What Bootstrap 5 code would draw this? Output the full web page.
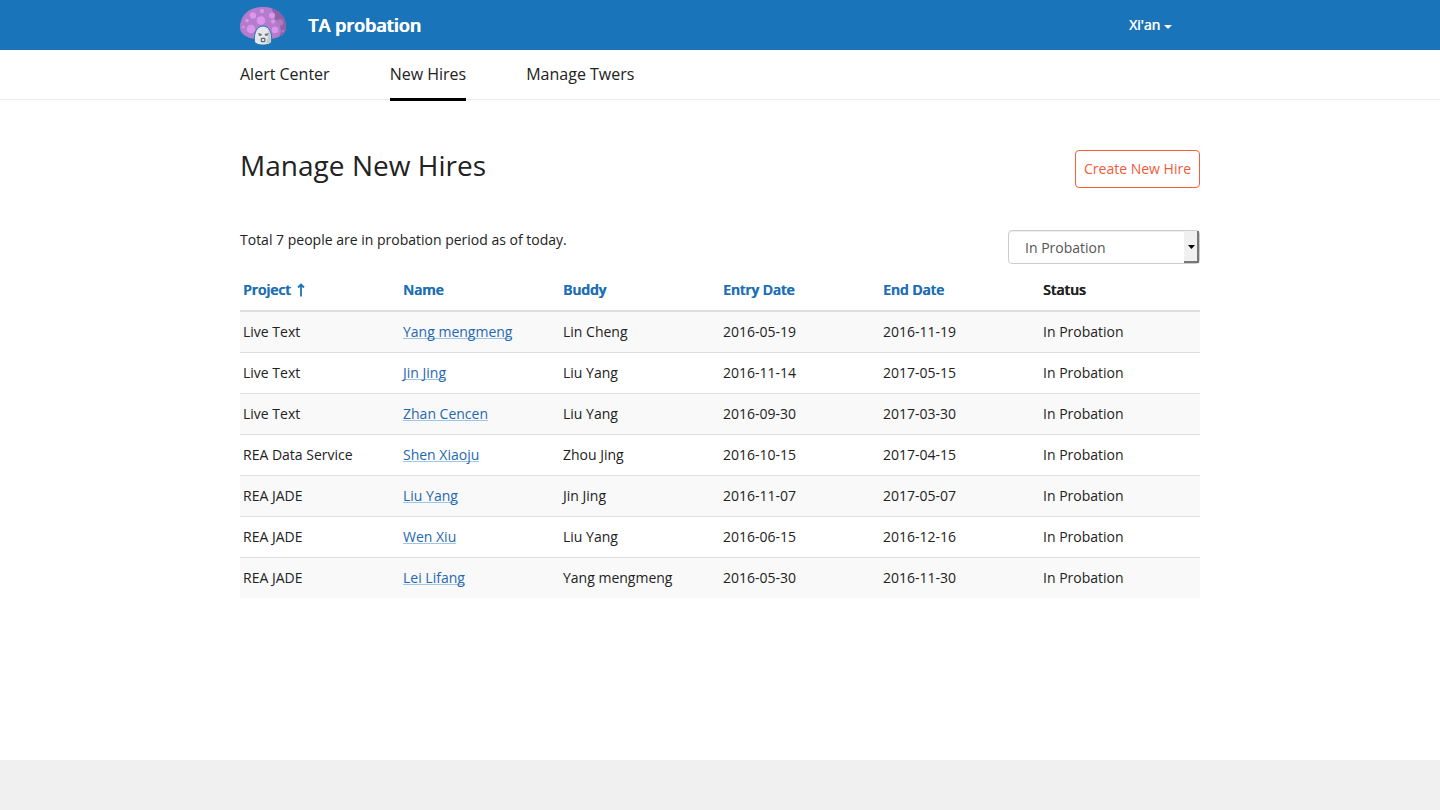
<!DOCTYPE html>
<html lang="en">
<head>
<meta charset="utf-8">
<meta name="viewport" content="width=device-width, initial-scale=1">
<title>TA probation</title>
<link rel="stylesheet" href="https://cdn.jsdelivr.net/npm/bootstrap@5.3.0/dist/css/bootstrap.min.css">
<style>
body{font-family:"Open Sans",sans-serif;font-size:14px;line-height:20px;color:#222;background:#fff;min-height:810px}
.page-wrap{width:960px}
.top-bar{height:50px;background:#1a74ba}
.logo{margin-top:2px}
.brand-name{font-size:18px;line-height:26px;margin-left:22px;font-weight:600;text-shadow:.8px 0 currentColor}
.office{margin-right:28px;text-shadow:.5px 0 currentColor}
.office::after{border-top:4px solid;border-left:4px solid transparent;border-right:4px solid transparent;margin-left:4px;vertical-align:1px}
.tab-bar{height:50px;border-bottom:1px solid #ececec}
.tab-bar .nav{gap:60px}
.tab-bar .nav-link{font-size:16px;line-height:24px;padding:12px 0 12px;height:51px;color:#222}
.tab-bar .nav-link.active{border-bottom:3px solid #000}
.title-row{margin-top:50px}
.filter-row{margin-top:42px}
.page-title{font-size:28px;line-height:30px;letter-spacing:.03px}
.btn-hire{--bs-btn-color:#f4593a;--bs-btn-border-color:#f65f36;--bs-btn-padding-x:8px;--bs-btn-padding-y:8px;--bs-btn-font-size:14px;--bs-btn-line-height:20px;--bs-btn-border-radius:4px;width:125px;height:38px}
.status-pick{width:192px;height:34px;border:1px solid #ccc;border-radius:4px;color:#555;padding:0 0 0 16px;box-shadow:inset 0 1px 1px rgba(0,0,0,.075)}
.pick-label{padding-top:2px}
.pick-arrow{width:15px;height:32px;background:#f0f0f0;border-right:2px solid #777;border-bottom:2px solid #777;padding:2px 0 0 1px}
.hires{--bs-table-color:#222;--bs-table-striped-color:#222;--bs-table-striped-bg:#f9f9f9;--bs-table-bg:#fff;table-layout:fixed;margin-top:5px}
.hires>:not(caption)>*>*{padding:10px 3px;border-bottom:0;border-top:1px solid #ddd}
.hires>thead>tr>th{font-weight:600;text-shadow:.6px 0 currentColor;border-top:0;border-bottom:2px solid #ddd;padding:11px 3px 10px}
.hires>tbody>tr:first-child>td{border-top:0}
.hires>thead>tr>th.sortable{color:#1d6fb5}
.sort-arrow{margin:3px 0 0 3px}
.hires a{color:#1f68b0;text-decoration:none;background:linear-gradient(#a0c6e6,#a0c6e6) 0 14px/100% 1px no-repeat;display:inline-block;line-height:16px}
.foot{height:50px;background:#f0f0f0}
</style>
</head>
<body class="d-flex flex-column">
<header class="top-bar text-white">
  <div class="page-wrap mx-auto h-100 d-flex align-items-center">
    <svg width="46" height="38" viewBox="0 0 46 38" class="logo">
      <defs><clipPath id="cap"><path d="M0 20C0 8 10 0 23 0S46 8 46 20C46 27 40 31 30 32L16 32C6 31 0 27 0 20Z"/></clipPath></defs>
      <g clip-path="url(#cap)">
        <path fill="#b47dcb" d="M0 0h46v33H0z"/>
        <path fill="#8e62a3" d="M32 2h14v30H38l3-7-1-8-5-5z"/>
        <g fill="#dc95ef"><circle cx="22" cy="4" r="2.2"/><circle cx="13" cy="8.500" r="3.200"/><circle cx="32" cy="8.500" r="3"/><circle cx="21" cy="13.500" r="4.300"/><circle cx="7" cy="13.500" r="1.800"/><circle cx="11" cy="22" r="4.300"/><circle cx="3.500" cy="20" r="1.200"/><circle cx="33" cy="14.500" r="2"/><circle cx="35" cy="23" r="3.300"/></g>
        <g fill="#ae78c3"><circle cx="40" cy="15.500" r="3.300"/><circle cx="43" cy="24" r="1.500"/></g>
      </g>
      <path d="M14.500 34.500C13.500 26 17 19 23 19s9.500 7 8.500 15.500c-.5 4.800-16.500 4.800-17 0Z" fill="#e4e8ed" stroke="#1a74ba"/>
      <path d="M28 23c4 5 3 12 2 13l-4 1 2-7z" fill="#c5cacf"/>
      <path d="M18 26l4 1-1 2-2-.3zM28.500 26l-4 1 1 2 2-.3z" fill="#70757a"/>
      <rect x="21.300" y="31.300" width="3.600" height="3.400" rx=".8" fill="#e4e8ed" stroke="#62676c" stroke-width="1.200"/>
    </svg>
    <span class="brand-name">TA probation</span>
    <span class="office dropdown-toggle ms-auto">Xi'an</span>
  </div>
</header>
<nav class="tab-bar">
  <div class="page-wrap mx-auto">
    <div class="nav">
      <a class="nav-link" href="#">Alert Center</a>
      <a class="nav-link active" href="#">New Hires</a>
      <a class="nav-link" href="#">Manage Twers</a>
    </div>
  </div>
</nav>
<main class="page-wrap mx-auto flex-grow-1">
  <div class="title-row d-flex justify-content-between">
    <h1 class="page-title fw-normal mb-0">Manage New Hires</h1>
    <button class="btn btn-hire text-nowrap">Create New Hire</button>
  </div>
  <div class="filter-row d-flex justify-content-between">
    <p class="mb-0">Total 7 people are in probation period as of today.</p>
    <div class="status-pick d-flex align-items-center justify-content-between">
      <span class="pick-label">In Probation</span>
      <span class="pick-arrow d-flex align-items-center justify-content-center"><svg width="7" height="4" viewBox="0 0 7 4"><path d="M0 0h7L3.500 4z"/></svg></span>
    </div>
  </div>
  <table class="table table-striped hires mb-0">
    <thead><tr><th class="sortable">Project <svg width="8" height="14" viewBox="0 0 8 14" class="align-text-top sort-arrow"><path d="M4 13.500V2M1 4.500L4 1.500l3 3" fill="none" stroke="#1a74ba" stroke-width="1.800"/></svg></th><th class="sortable">Name</th><th class="sortable">Buddy</th><th class="sortable">Entry Date</th><th class="sortable">End Date</th><th>Status</th></tr></thead>
    <tbody>
      <tr><td>Live Text</td><td><a href="#">Yang mengmeng</a></td><td>Lin Cheng</td><td>2016-05-19</td><td>2016-11-19</td><td>In Probation</td></tr>
      <tr><td>Live Text</td><td><a href="#">Jin Jing</a></td><td>Liu Yang</td><td>2016-11-14</td><td>2017-05-15</td><td>In Probation</td></tr>
      <tr><td>Live Text</td><td><a href="#">Zhan Cencen</a></td><td>Liu Yang</td><td>2016-09-30</td><td>2017-03-30</td><td>In Probation</td></tr>
      <tr><td>REA Data Service</td><td><a href="#">Shen Xiaoju</a></td><td>Zhou Jing</td><td>2016-10-15</td><td>2017-04-15</td><td>In Probation</td></tr>
      <tr><td>REA JADE</td><td><a href="#">Liu Yang</a></td><td>Jin Jing</td><td>2016-11-07</td><td>2017-05-07</td><td>In Probation</td></tr>
      <tr><td>REA JADE</td><td><a href="#">Wen Xiu</a></td><td>Liu Yang</td><td>2016-06-15</td><td>2016-12-16</td><td>In Probation</td></tr>
      <tr><td>REA JADE</td><td><a href="#">Lei Lifang</a></td><td>Yang mengmeng</td><td>2016-05-30</td><td>2016-11-30</td><td>In Probation</td></tr>
    </tbody>
  </table>
</main>
<footer class="foot"></footer>
<script src="https://cdn.jsdelivr.net/npm/bootstrap@5.3.0/dist/js/bootstrap.bundle.min.js"></script>
</body>
</html>
